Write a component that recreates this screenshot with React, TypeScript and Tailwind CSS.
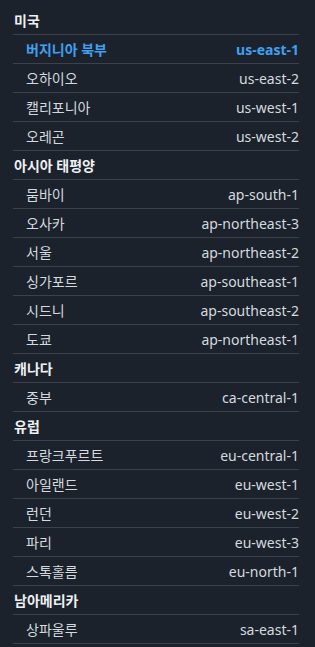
const GROUPS = [
  {
    title: "미국",
    items: [
      { name: "버지니아 북부", code: "us-east-1", active: true },
      { name: "오하이오", code: "us-east-2" },
      { name: "캘리포니아", code: "us-west-1" },
      { name: "오레곤", code: "us-west-2" },
    ],
  },
  {
    title: "아시아 태평양",
    items: [
      { name: "뭄바이", code: "ap-south-1" },
      { name: "오사카", code: "ap-northeast-3" },
      { name: "서울", code: "ap-northeast-2" },
      { name: "싱가포르", code: "ap-southeast-1" },
      { name: "시드니", code: "ap-southeast-2" },
      { name: "도쿄", code: "ap-northeast-1" },
    ],
  },
  {
    title: "캐나다",
    items: [{ name: "중부", code: "ca-central-1" }],
  },
  {
    title: "유럽",
    items: [
      { name: "프랑크푸르트", code: "eu-central-1" },
      { name: "아일랜드", code: "eu-west-1" },
      { name: "런던", code: "eu-west-2" },
      { name: "파리", code: "eu-west-3" },
      { name: "스톡홀름", code: "eu-north-1" },
    ],
  },
  {
    title: "남아메리카",
    items: [{ name: "상파울루", code: "sa-east-1" }],
  },
];

export default function App() {
  return (
    <div
      className="w-[315px] h-[647px] bg-[#1b222c] pl-[13px] pr-[16px] pt-[6px] text-[14px]"
      style={{ fontFamily: '"Noto Sans", "Noto Sans CJK KR", sans-serif' }}
    >
      {GROUPS.map((g) => (
        <div key={g.title}>
          <div className="h-[29px] flex items-center pl-px border-b border-[#3b424c] font-bold text-[#eef0f2]">
            {g.title}
          </div>
          {g.items.map((it) => (
            <div
              key={it.code}
              className={
                it.active
                  ? "h-[29px] flex items-center justify-between pl-[13px] border-b border-[#3b424c] font-bold text-[#3fa0f0]"
                  : "h-[29px] flex items-center justify-between pl-[13px] border-b border-[#3b424c] text-[#d5d9de]"
              }
            >
              <span>{it.name}</span>
              <span>{it.code}</span>
            </div>
          ))}
        </div>
      ))}
    </div>
  );
}
